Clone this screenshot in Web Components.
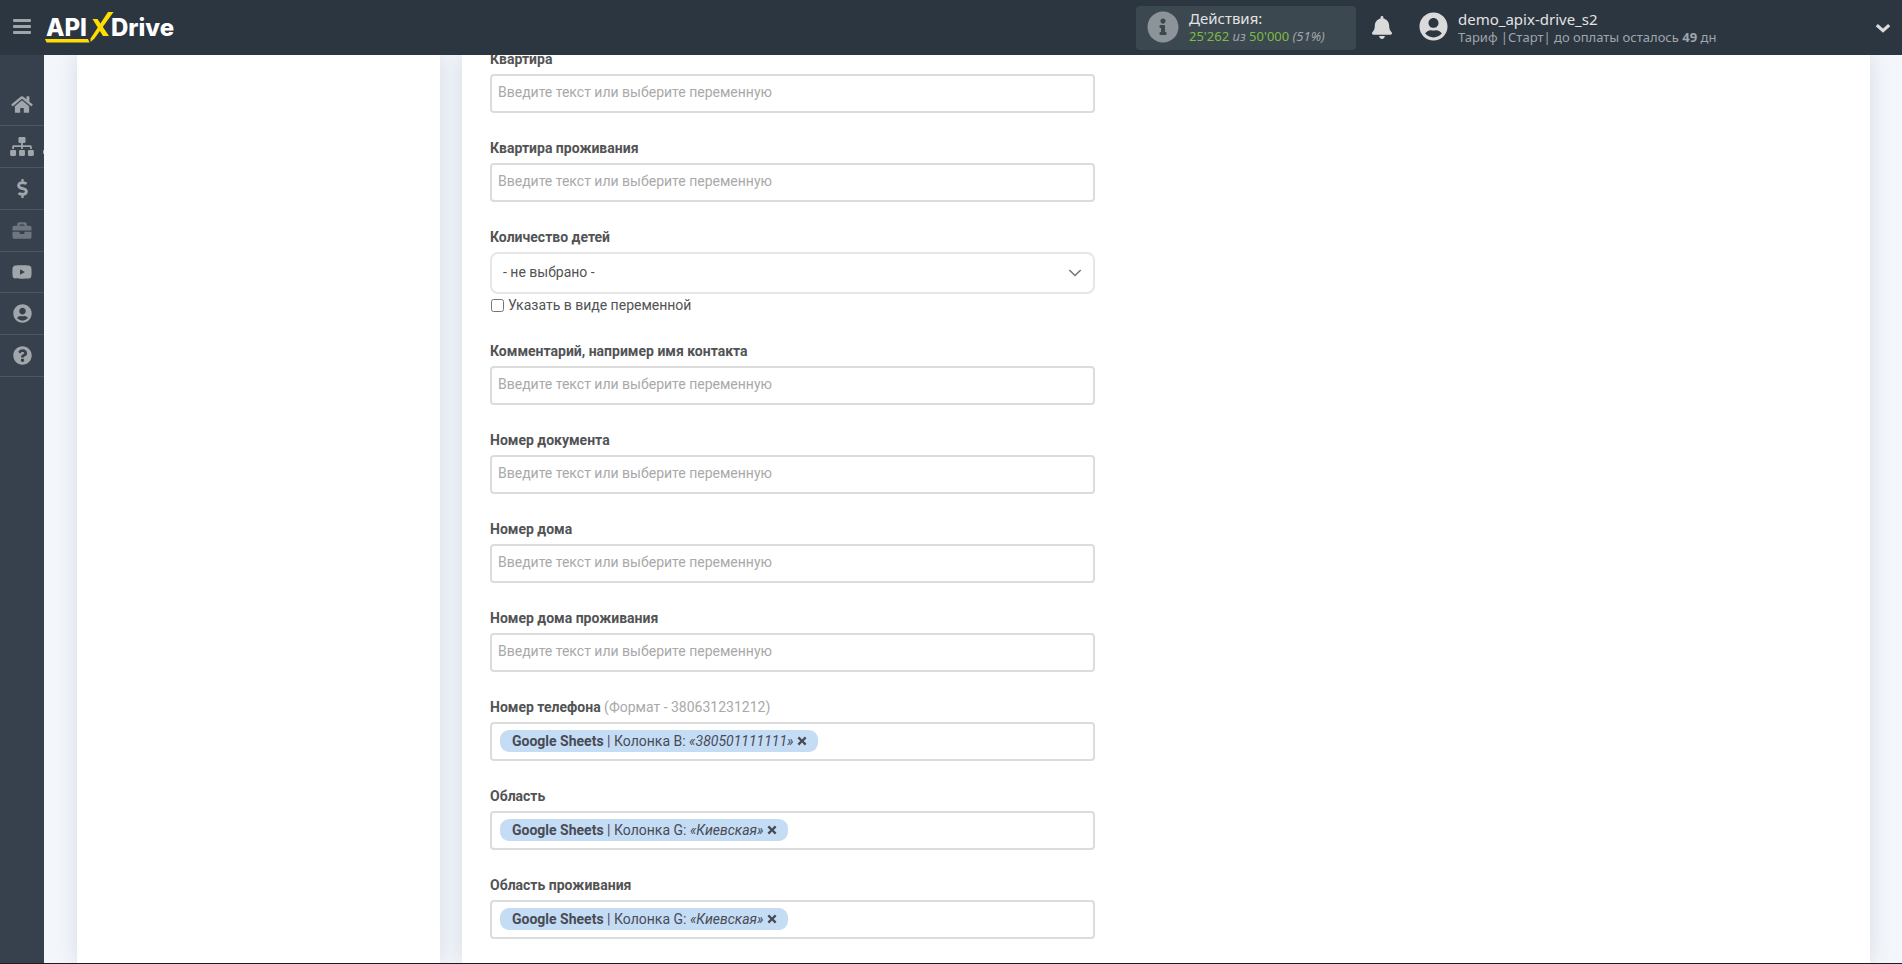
<!DOCTYPE html>
<html lang="ru">
<head>
<meta charset="utf-8">
<meta name="viewport" content="width=device-width, initial-scale=1">
<title>APIXDrive</title>
<style>
  html, body { margin: 0; }
  body { font-family: Roboto, sans-serif; font-size: 14px; line-height: 20px; color: #525355; background: #f3f7fc; }
</style>
</head>
<body>
<apix-app>
  <apix-header slot="header"></apix-header>
  <apix-sidebar slot="sidebar"></apix-sidebar>
  <apix-card></apix-card>
  <apix-card>
    <apix-form>
      <text-field label="Квартира"></text-field>
      <text-field label="Квартира проживания"></text-field>
      <select-field label="Количество детей"></select-field>
      <text-field label="Комментарий, например имя контакта"></text-field>
      <text-field label="Номер документа"></text-field>
      <text-field label="Номер дома"></text-field>
      <text-field label="Номер дома проживания"></text-field>
      <variable-field label="Номер телефона" hint="(Формат - 380631231212)"><variable-chip source="Google Sheets" column="Колонка B:">«380501111111»</variable-chip></variable-field>
      <variable-field label="Область"><variable-chip source="Google Sheets" column="Колонка G:">«Киевская»</variable-chip></variable-field>
      <variable-field label="Область проживания"><variable-chip source="Google Sheets" column="Колонка G:">«Киевская»</variable-chip></variable-field>
    </apix-form>
  </apix-card>
</apix-app>

<script>
class Base extends HTMLElement {
  connectedCallback() {
    if (this.shadowRoot) return;
    this.attachShadow({ mode: 'open' }).innerHTML = this.view();
  }
}

const ICONS = {
  home: ['0 0 576 512', 'M280.37 148.26L96 300.11V464a16 16 0 0 0 16 16l112.06-.29a16 16 0 0 0 15.92-16V368a16 16 0 0 1 16-16h64a16 16 0 0 1 16 16v95.64a16 16 0 0 0 16 16.05L464 480a16 16 0 0 0 16-16V300L295.67 148.26a12.19 12.19 0 0 0-15.3 0zM571.6 251.47L488 182.56V44.05a12 12 0 0 0-12-12h-56a12 12 0 0 0-12 12v72.61L318.47 43a48 48 0 0 0-61 0L4.34 251.47a12 12 0 0 0-1.6 16.9l25.5 31A12 12 0 0 0 45.15 301l235.22-193.74a12.19 12.19 0 0 1 15.3 0L530.9 301a12 12 0 0 0 16.9-1.6l25.5-31a12 12 0 0 0-1.7-16.93z'],
  sitemap: ['0 0 640 512', 'M128 352H32c-17.67 0-32 14.33-32 32v96c0 17.67 14.33 32 32 32h96c17.67 0 32-14.33 32-32v-96c0-17.67-14.33-32-32-32zm-24-80h192v48h48v-48h192v48h48v-57.59c0-21.17-17.23-38.41-38.41-38.41H344v-64h40c17.67 0 32-14.33 32-32V32c0-17.67-14.33-32-32-32H256c-17.67 0-32 14.33-32 32v96c0 17.67 14.33 32 32 32h40v64H94.41C73.23 224 56 241.23 56 262.41V320h48v-48zm264 80h-96c-17.67 0-32 14.33-32 32v96c0 17.67 14.33 32 32 32h96c17.67 0 32-14.33 32-32v-96c0-17.67-14.33-32-32-32zm240 0h-96c-17.67 0-32 14.33-32 32v96c0 17.67 14.33 32 32 32h96c17.67 0 32-14.33 32-32v-96c0-17.67-14.33-32-32-32z'],
  dollar: ['0 0 288 512', 'M209.2 233.4l-108-31.6C88.7 198.2 80 186.5 80 173.5c0-16.3 13.2-29.5 29.5-29.5h66.3c12.2 0 24.2 3.7 34.2 10.5 6.1 4.1 14.3 3.1 19.5-2l34.8-34c7.1-6.9 6.1-18.4-1.8-24.5C238 74.8 207.4 64.1 176 64V16c0-8.800-7.2-16-16-16h-32c-8.800 0-16 7.2-16 16v48h-2.500C45.800 64-5.400 118.700.5 183.600c4.200 46.100 39.400 83.600 83.800 96.600l102.500 30c12.500 3.700 21.200 15.300 21.200 28.300 0 16.300-13.200 29.500-29.500 29.500h-66.300C100 368 88 364.300 78 357.500c-6.100-4.100-14.300-3.100-19.500 2l-34.800 34c-7.100 6.900-6.100 18.400 1.800 24.500 24.500 19.200 55.100 29.900 86.500 30v48c0 8.800 7.2 16 16 16h32c8.800 0 16-7.2 16-16v-48.200c46.600-.9 90.300-28.600 105.700-72.700 21.500-61.600-14.600-124.800-72.500-141.700z'],
  briefcase: ['0 0 512 512', 'M320 336c0 8.840-7.160 16-16 16h-96c-8.840 0-16-7.160-16-16v-48H0v144c0 25.600 22.400 48 48 48h416c25.600 0 48-22.400 48-48V288H320v48zm144-208h-80V80c0-25.600-22.400-48-48-48H176c-25.600 0-48 22.400-48 48v48H48c-25.600 0-48 22.400-48 48v80h512v-80c0-25.600-22.400-48-48-48zm-144 0H192V96h128v32z'],
  youtube: ['0 0 576 512', 'M549.655 124.083c-6.281-23.650-24.787-42.276-48.284-48.597C458.781 64 288 64 288 64S117.220 64 74.629 75.486c-23.497 6.322-42.003 24.947-48.284 48.597-11.412 42.867-11.412 132.305-11.412 132.305s0 89.438 11.412 132.305c6.281 23.650 24.787 41.500 48.284 47.821C117.220 448 288 448 288 448s170.780 0 213.371-11.486c23.497-6.321 42.003-24.171 48.284-47.821 11.412-42.867 11.412-132.305 11.412-132.305s0-89.438-11.412-132.305zM232 335V177l139 79z'],
  user: ['0 0 496 512', 'M248 8C111 8 0 119 0 256s111 248 248 248 248-111 248-248S385 8 248 8zm0 96c48.600 0 88 39.400 88 88s-39.400 88-88 88-88-39.400-88-88 39.400-88 88-88zm0 344c-58.700 0-111.300-26.600-146.500-68.200 18.800-35.400 55.600-59.800 98.500-59.800 2.400 0 4.800.4 7.100 1.100 13 4.200 26.600 6.900 40.900 6.900 14.300 0 28-2.700 40.900-6.900 2.300-.7 4.700-1.100 7.100-1.100 42.900 0 79.700 24.400 98.500 59.800C359.300 421.400 306.700 448 248 448z'],
  question: ['0 0 512 512', 'M504 256c0 137-111 248-248 248S8 393 8 256C8 119.100 119 8 256 8s248 111.100 248 248zM262.700 90c-54.500 0-89.300 23-116.500 63.800-3.500 5.300-2.400 12.400 2.700 16.300l34.700 26.300c5.200 3.900 12.600 3 16.700-2.100 17.900-22.700 30.100-35.800 57.300-35.800 20.400 0 45.700 13.100 45.700 33 0 15-12.400 22.700-32.500 34C247.100 238.500 216 254.900 216 296v4c0 6.600 5.400 12 12 12h56c6.600 0 12-5.400 12-12v-1.300c0-28.500 83.200-29.600 83.200-106.700 0-58-60.200-102-116.500-102zM256 338c-25.400 0-46 20.600-46 46 0 25.400 20.600 46 46 46s46-20.600 46-46c0-25.400-20.600-46-46-46z'],
  info: ['0 0 512 512', 'M256 8C119 8 8 119.100 8 256c0 137 111 248 248 248s248-111 248-248C504 119.100 393 8 256 8zm0 110c23.200 0 42 18.800 42 42s-18.800 42-42 42-42-18.800-42-42 18.800-42 42-42zm56 254c0 6.600-5.400 12-12 12h-88c-6.600 0-12-5.400-12-12v-24c0-6.600 5.400-12 12-12h12v-64h-12c-6.600 0-12-5.400-12-12v-24c0-6.600 5.400-12 12-12h64c6.600 0 12 5.400 12 12v100h12c6.600 0 12 5.400 12 12v24z'],
  bell: ['0 0 448 512', 'M224 512c35.320 0 63.970-28.650 63.970-64H160.030c0 35.350 28.650 64 63.970 64zm215.390-149.710c-19.320-20.760-55.470-51.990-55.470-154.290 0-77.700-54.480-139.900-127.940-155.160V32c0-17.670-14.320-32-31.980-32s-31.980 14.330-31.980 32v20.840C118.560 68.100 64.080 130.300 64.080 208c0 102.300-36.150 133.530-55.470 154.290-6 6.450-8.660 14.160-8.610 21.710.11 16.400 12.980 32 32.100 32h383.800c19.120 0 32-15.600 32.100-32 .05-7.550-2.610-15.270-8.610-21.710z'],
  chevron: ['0 0 16 10', 'M0.700 3.200L2.900 1L8 5.400L13.100 1L15.300 3.200L8 9.800z'],
  times: ['0 0 10 10', 'M0.500 2.300L2.200 0.600L5 3.400L7.800 0.600L9.500 2.300L6.700 5L9.500 7.700L7.800 9.400L5 6.600L2.200 9.400L0.500 7.700L3.300 5z']
};
class UiIcon extends Base {
  view() {
    const [box, d] = ICONS[this.getAttribute('name')];
    return `<style>:host{display:inline-flex}svg{display:block;width:100%;height:100%;fill:currentColor}</style>
      <svg viewBox="${box}" aria-hidden="true"><path d="${d}"/></svg>`;
  }
}
customElements.define('ui-icon', UiIcon);

customElements.define('apix-app', class extends Base {
  view() {
    return `<style>
      :host{display:grid;grid-template:auto minmax(0,1fr) / 44px minmax(0,1fr);height:100vh;box-sizing:border-box;overflow:hidden;border-bottom:1px solid #1d1d20}
      .top{grid-column:1 / -1}
      .side{display:flex}
      main{display:grid;grid-template-columns:minmax(0,363fr) minmax(0,1408fr);gap:22px;padding:0 32px 0 33px;overflow:hidden}
    </style>
    <div class="top"><slot name="header"></slot></div>
    <div class="side"><slot name="sidebar"></slot></div>
    <main><slot></slot></main>`;
  }
});

customElements.define('apix-logo', class extends Base {
  view() {
    return `<style>
      :host{display:block}a{display:block}svg{display:block;width:136px;height:34px}
      text{font:800 24px Inter,sans-serif;fill:#fff}
    </style>
    <a href="#" aria-label="APIXDrive"><svg viewBox="0 0 136 34">
      <text x="1" y="25">API</text><text x="66" y="25">Drive</text>
      <path d="M0 28H43L44.500 31.500H1.500z" fill="#fd0"/>
      <path d="M63 1H68.500L49.500 27.500L45.500 31V27.500z" fill="#fd0"/>
      <path d="M47.500 8H52.500L64 25H58z" fill="#fd0"/>
    </svg></a>`;
  }
});

customElements.define('apix-header', class extends Base {
  view() {
    return `<style>
      :host{display:flex;align-items:center;height:55px;background:#2b3641;color:#e3e3e3;font-family:"Noto Sans",sans-serif;font-size:13px;line-height:18px}
      button{border:0;padding:0;background:none;color:inherit;font:inherit;text-align:left;cursor:pointer}
      .burger{display:grid;gap:3px;width:18px;margin:0 14px 2px 13px}
      .burger i{height:3px;border-radius:1px;background:#9fa5a8}
      .actions{display:flex;align-items:center;gap:10px;box-sizing:border-box;width:220px;height:44px;margin-left:auto;padding:0 11px 2px;border-radius:4px;background:#3b4850}
      .actions ui-icon{width:32px;height:32px;color:#8d9499}
      .title{display:block;font-size:15px;line-height:18px}
      .sub{display:block;color:#a0a5aa}
      .num{color:#7fba45}
      .bell{width:20px;height:23px;margin:0 27px 0 16px;color:#dadada}
      .bell ui-icon{width:20px;height:23px}
      .account{display:flex;align-items:center;gap:10px;width:472px;height:44px;margin-right:11px}
      .avatar{width:29px;height:29px;margin-bottom:2px;color:#dadada}
      .who{flex:1}
      .arrow{width:16px;height:10px;color:#dadada}
    </style>
    <button class="burger" aria-label="Меню"><i></i><i></i><i></i></button>
    <apix-logo></apix-logo>
    <button class="actions"><ui-icon name="info"></ui-icon>
      <span><span class="title">Действия:</span><span class="sub"><span class="num">25'262</span> <em>из</em> <span class="num">50'000</span> <em>(51%)</em></span></span></button>
    <button class="bell" aria-label="Уведомления"><ui-icon name="bell"></ui-icon></button>
    <button class="account"><ui-icon class="avatar" name="user"></ui-icon>
      <span class="who"><span class="title">demo_apix-drive_s2</span><span class="sub">Тариф |Старт| до оплаты осталось <b>49</b> дн</span></span>
      <ui-icon class="arrow" name="chevron"></ui-icon></button>`;
  }
});

customElements.define('apix-sidebar', class extends Base {
  view() {
    const items = [['home', 'Главная', 22, 19], ['sitemap', 'Связи', 24, 19], ['dollar', 'Оплата', 11, 19], ['briefcase', 'Услуги', 20, 19], ['youtube', 'Видео', 22, 18], ['user', 'Профиль', 19, 19], ['question', 'Помощь', 19, 19]];
    return `<style>
      :host{display:block;flex:1;background:#36414d}
      nav{display:grid;padding-top:29px}
      a{display:flex;align-items:center;justify-content:center;box-sizing:border-box;height:42px;border-bottom:1px solid #4b5761;color:#a0a6aa}
      a.briefcase{color:#6e7780}
      a.youtube{height:41px}
      a.sitemap{position:relative}
      a.sitemap::after{content:"";position:absolute;right:0;top:24px;width:1px;height:4px;background:#a0a6aa}
    </style>
    <nav>${items.map(([n, t, w, h]) => `<a class="${n}" href="#" aria-label="${t}"><ui-icon name="${n}" style="width:${w}px;height:${h}px"></ui-icon></a>`).join('')}</nav>`;
  }
});

customElements.define('apix-card', class extends Base {
  view() {
    return `<style>:host{display:block;padding:0 28px;background:#fff;box-shadow:0 0 20px rgba(50,60,80,.15)}</style><slot></slot>`;
  }
});

/* The form is scrolled: its first caption is partly under the header. */
customElements.define('apix-form', class extends Base {
  view() {
    return `<style>:host{display:grid;gap:25px;max-width:605px;margin-top:-6px}</style><slot></slot>`;
  }
});

const FIELD_CSS = `
  :host{display:block}
  *{box-sizing:border-box}
  label,.label{display:block;height:20px;margin-bottom:5px;font-weight:700}
  .box{display:block;width:100%;height:39px;border:2px solid #dcdcdc;border-radius:4px;background:#fff}
  input,select{font:inherit;color:inherit}`;

customElements.define('text-field', class extends Base {
  view() {
    return `<style>${FIELD_CSS}
      input{padding:0 6px 3px;outline:0}
      input::placeholder{color:#a9a9a9;opacity:1}
    </style>
    <label for="f">${this.getAttribute('label')}</label>
    <input class="box" id="f" type="text" placeholder="Введите текст или выберите переменную">`;
  }
});

customElements.define('select-field', class extends Base {
  view() {
    return `<style>${FIELD_CSS}
      .wrap{display:grid;align-items:center}
      .wrap>*{grid-area:1/1}
      select.box{height:42px;padding:0 40px 2px 11px;border-color:#e6e6e6;border-radius:8px;appearance:none}
      svg{justify-self:end;width:14px;height:8px;margin-right:13px;pointer-events:none}
      label.check{display:flex;align-items:center;gap:4px;margin:1px 0;font-weight:400}
      .check input{width:13px;height:13px;margin:0 0 0 1px}
    </style>
    <label for="s">${this.getAttribute('label')}</label>
    <div class="wrap"><select class="box" id="s"><option>- не выбрано -</option></select>
      <svg viewBox="0 0 14 8" fill="none" stroke="#777" stroke-width="1.600" aria-hidden="true"><path d="M1.300 1L7 6.500L12.700 1"/></svg></div>
    <label class="check"><input type="checkbox">Указать в виде переменной</label>`;
  }
});

customElements.define('variable-field', class extends Base {
  view() {
    return `<style>${FIELD_CSS}
      .box{display:flex;align-items:flex-start;padding:6px 8px}
      input{flex:1;min-width:0;height:22px;border:0;padding:0 4px;outline:0;background:none}
      .hint{font-weight:400;color:#a9a9a9}
    </style>
    <label for="v">${this.getAttribute('label')} <span class="hint">${this.getAttribute('hint') || ''}</span></label>
    <div class="box"><slot></slot><input id="v" type="text"></div>`;
  }
});

customElements.define('variable-chip', class extends Base {
  view() {
    return `<style>
      :host{display:flex;align-items:center;height:22px;padding:0 11px 0 12px;border-radius:9px;background:#c5dcf5;color:#484b55;white-space:pre}
      button{display:flex;width:10px;height:10px;margin:0 0 0 4px;padding:0;border:0;background:none;color:inherit;cursor:pointer}
      ui-icon{width:10px;height:10px}
    </style>
    <span><b>${this.getAttribute('source')}</b> | ${this.getAttribute('column')} <em><slot></slot></em></span><button aria-label="Удалить"><ui-icon name="times"></ui-icon></button>`;
  }
});
</script>
</body>
</html>
